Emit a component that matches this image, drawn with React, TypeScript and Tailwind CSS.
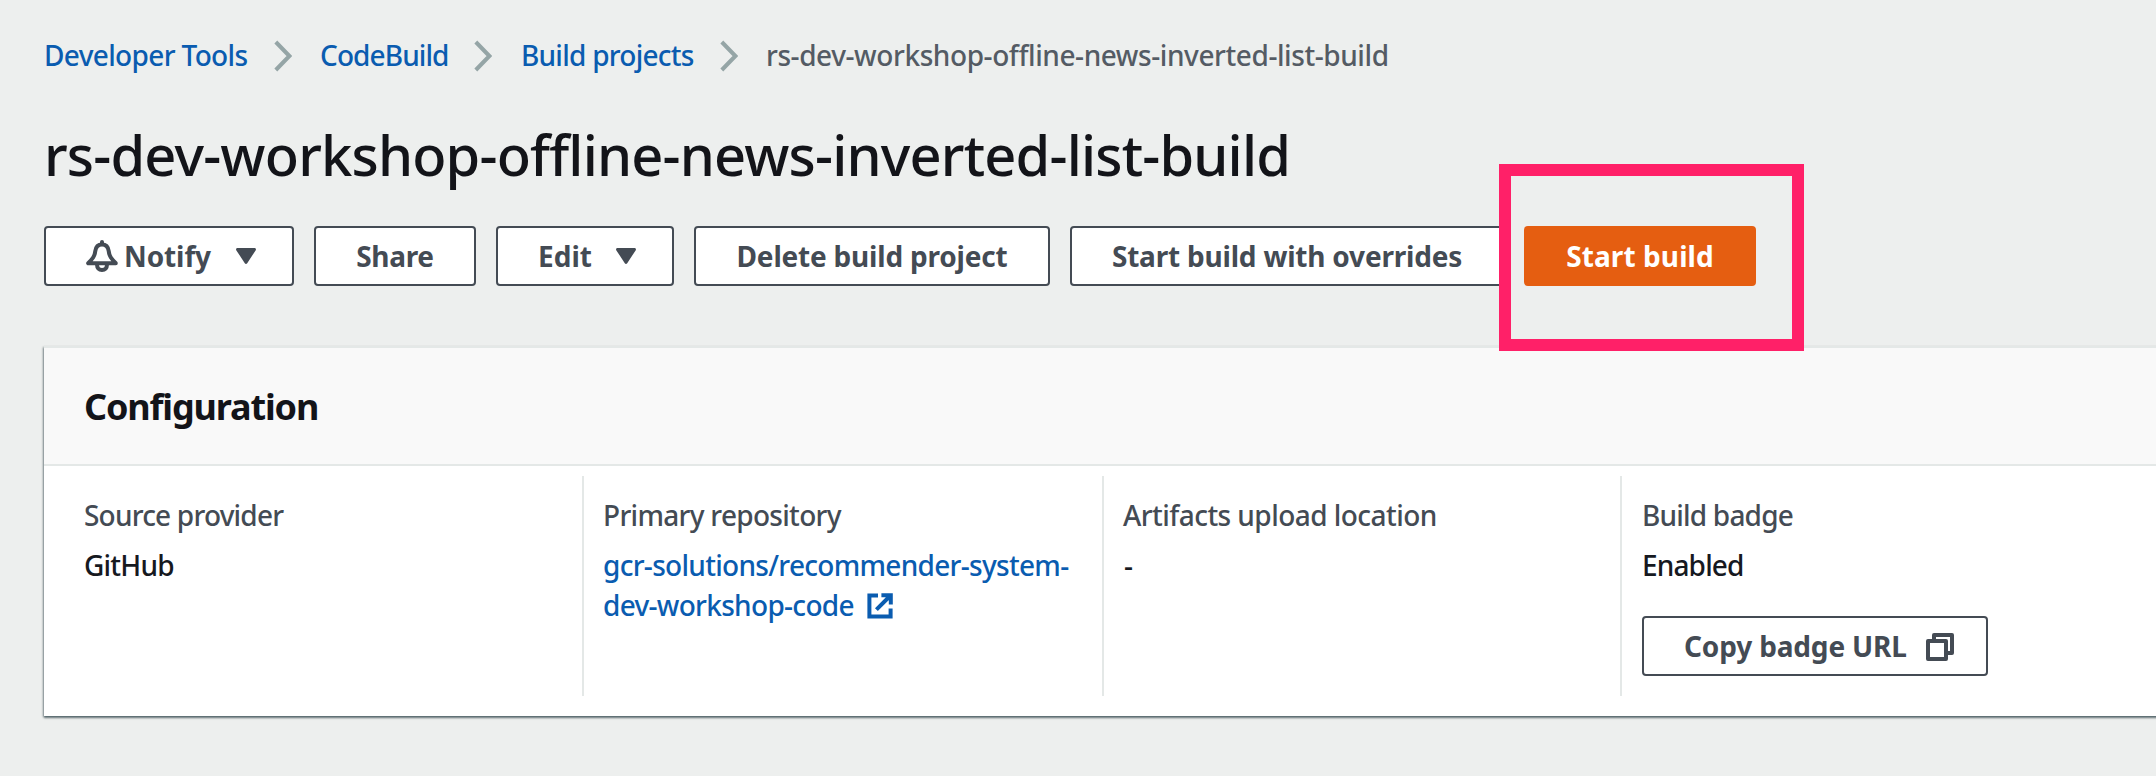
import type { ReactNode } from "react";

function Chevron({ className = "" }: { className?: string }) {
  return (
    <svg viewBox="0 0 18 32" className={"mt-0.5 h-8 w-[18px] shrink-0 " + className} fill="none" stroke="#95a5a6" strokeWidth="4">
      <path d="M1.8 2L15.4 16L1.8 30" />
    </svg>
  );
}

function BellIcon() {
  return (
    <svg viewBox="0 0 32 32" className="h-8 w-8 shrink-0" fill="none" stroke="currentColor" strokeWidth="4" strokeLinejoin="round" strokeLinecap="round">
      <path d="M16 2V4" />
      <path d="M16 4.4C11.8 4.4 9.8 7 9.3 11C8.7 16.5 6.5 18.8 2.2 23.2H29.8C25.5 18.8 23.3 16.5 22.7 11C22.2 7 20.2 4.4 16 4.4Z" />
      <path d="M11 24.5C11 28 13 30 16 30C19 30 21 28 21 24.5" strokeLinecap="butt" />
    </svg>
  );
}

function Caret() {
  return (
    <svg viewBox="0 0 20 16" className="mt-px h-4 w-5 shrink-0" fill="currentColor">
      <path d="M1.6 0H18.4C19.8 0 20.4 1.3 19.6 2.4L11.2 15.2C10.6 16.2 9.4 16.2 8.8 15.2L0.4 2.4C-0.4 1.3 0.2 0 1.6 0Z" />
    </svg>
  );
}

function ExternalIcon() {
  return (
    <svg viewBox="0 0 26 26" className="mt-0.5 h-[26px] w-[26px]" fill="none" stroke="currentColor" strokeWidth="4">
      <path d="M11 2.4H2.4V23.6H23.6V15.4" />
      <path d="M14.4 2.2H23.8V11.6M23 3L9.4 16.6" />
    </svg>
  );
}

function CopyIcon() {
  return (
    <svg viewBox="0 0 28 28" className="mt-0.5 h-7 w-7 shrink-0" fill="none" stroke="currentColor" strokeWidth="4" strokeLinejoin="round">
      <path d="M2 8H20V26H2Z" />
      <path d="M8 7V2H26V20H21" />
    </svg>
  );
}

function Button({ className = "", children }: { className?: string; children: ReactNode }) {
  return (
    <button
      className={
        "flex h-[60px] shrink-0 items-center rounded-[4px] border-2 pb-px text-[28px] leading-10 font-bold whitespace-nowrap " +
        className
      }
    >
      {children}
    </button>
  );
}

function Field({ label, labelClass, className = "", children }: { label: string; labelClass: string; className?: string; children: ReactNode }) {
  return (
    <div className={"h-[220px] pt-[19px] pl-5 " + className}>
      <div className={"text-[#444b54] " + labelClass}>{label}</div>
      <div className="mt-2.5 text-[#16191f]">{children}</div>
    </div>
  );
}

export default function App() {
  return (
    <div className="h-[776px] w-full overflow-hidden bg-[#edefee] pl-11 font-['Noto_Sans',sans-serif] text-[28px] leading-10 font-medium text-[#16191f]">
      <nav className="flex h-[75px] items-center pt-[35px] whitespace-nowrap text-[#0a5cb0]">
        <a className="w-[230px] tracking-[-0.65px]">Developer Tools</a>
        <Chevron />
        <a className="ml-7 w-[154px] tracking-[-0.9px]">CodeBuild</a>
        <Chevron />
        <a className="ml-[29px] w-[199px] tracking-[-0.75px]">Build projects</a>
        <Chevron />
        <span className="ml-7 tracking-[-0.42px] text-[#545b64]">rs-dev-workshop-offline-news-inverted-list-build</span>
      </nav>

      <h1 className="mt-[43px] text-[56px] leading-[72px] font-medium tracking-[-0.82px] whitespace-nowrap text-[#131419]">
        rs-dev-workshop-offline-news-inverted-list-build
      </h1>

      <div className="mt-9 flex h-[60px] text-[#444b54]">
        <Button className="w-[250px] border-[#444b54] bg-white pl-10">
          <BellIcon />
          <span className="ml-1.5 w-[112px] text-left tracking-[-0.1px]">Notify</span>
          <Caret />
        </Button>
        <Button className="ml-5 w-[162px] justify-center border-[#444b54] bg-white tracking-[-0.3px]">Share</Button>
        <Button className="ml-5 w-[178px] border-[#444b54] bg-white pl-10">
          <span className="w-[78px] text-left">Edit</span>
          <Caret />
        </Button>
        <Button className="ml-5 w-[356px] justify-center border-[#444b54] bg-white tracking-[-0.2px]">Delete build project</Button>
        <Button className="ml-5 w-[434px] justify-center border-[#444b54] bg-white tracking-[-0.2px]">Start build with overrides</Button>
        <div className="relative ml-5 shrink-0">
          <Button className="w-[232px] justify-center border-[#e55e11] bg-[#e55e11] tracking-[0.1px] text-white">Start build</Button>
          <div className="pointer-events-none absolute -top-[62px] -left-[25px] h-[187px] w-[305px] border-12 border-[#ff2068]" />
        </div>
      </div>

      <section className="mt-[60px] w-[2118px] border-t-2 border-[#e4e8e7] bg-white shadow-[0_2px_2px_0_rgba(0,28,36,0.5),-1px_1px_2px_0_rgba(0,28,36,0.35)]">
        <header className="h-[118px] border-b-2 border-[#e4e8e7] bg-[#f9f9f9] px-10 pt-[37px]">
          <h2 className="text-[36px] leading-[44px] font-bold tracking-[-1.15px] text-[#131419]">Configuration</h2>
        </header>
        <div className="grid grid-cols-[518px_520px_518px_520px] px-5 pt-2.5 pb-5">
          <Field label="Source provider" labelClass="tracking-[-0.8px]">
            <span className="tracking-[-0.8px]">GitHub</span>
          </Field>
          <Field label="Primary repository" labelClass="-ml-px tracking-[-0.7px]" className="border-l-2 border-[#e4e8e7]">
            <a className="-ml-px flex flex-col tracking-[-0.7px] whitespace-nowrap text-[#0a5cb0]">
              <span>gcr-solutions/recommender-system-</span>
              <span className="flex items-center gap-3">
                <span className="w-[252px]">dev-workshop-code</span>
                <ExternalIcon />
              </span>
            </a>
          </Field>
          <Field label="Artifacts upload location" labelClass="-ml-px tracking-[-0.55px]" className="border-l-2 border-[#e4e8e7]">
            -
          </Field>
          <Field label="Build badge" labelClass="tracking-[-0.8px]" className="border-l-2 border-[#e4e8e7]">
            <div className="tracking-[-0.85px]">Enabled</div>
            <Button className="mt-[31px] w-[346px] border-[#444b54] bg-white pl-10 text-[#444b54]">
              <span className="w-[242px] text-left tracking-[-0.15px]">Copy badge URL</span>
              <CopyIcon />
            </Button>
          </Field>
        </div>
      </section>
    </div>
  );
}
